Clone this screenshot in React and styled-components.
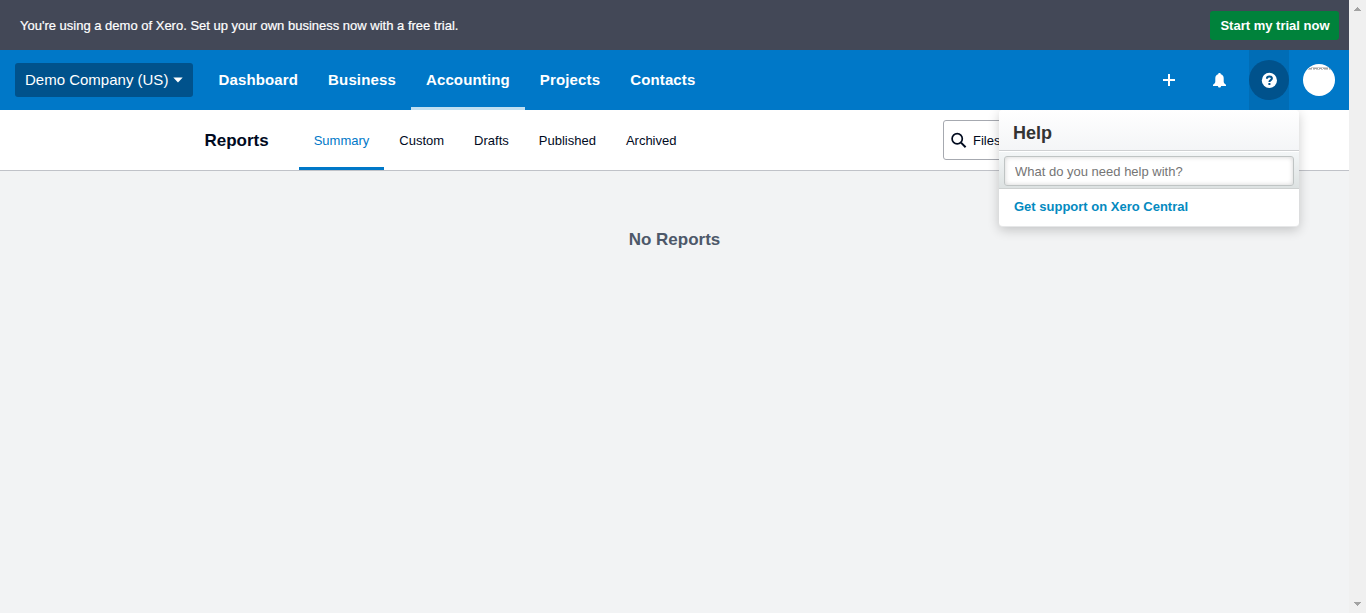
import React from "react";
import styled, { createGlobalStyle } from "styled-components";

const GlobalStyle = createGlobalStyle`
  * { box-sizing: border-box; }
  body { margin: 0; overflow: hidden; font-family: "Liberation Sans", Arial, sans-serif; font-size: 13px; color: #000a1e; }
`;

const Screen = styled.div`
  display: flex;
  height: 613px;
`;
const Page = styled.div`
  flex: 1;
  background: #f2f3f4;
`;
const ScrollTrack = styled.div`
  width: 17px;
  background: #f0f0f0;
  display: flex;
  flex-direction: column;
  justify-content: space-between;
  align-items: center;
  padding: 7px 0 7px;
`;
const Arrow = styled.svg`
  display: block;
  width: 7px;
  height: 4px;
  fill: #a3a3a3;
`;

const Banner = styled.div`
  height: 50px;
  display: flex;
  align-items: center;
  justify-content: space-between;
  padding: 0 10px 0 20px;
  background: #434857;
  color: #fff;
`;
const BannerText = styled.span`
  -webkit-text-stroke: 0.2px #fff;
`;
const TrialButton = styled.button`
  width: 129px;
  height: 29px;
  padding: 0;
  margin-top: 1px;
  border: 0;
  border-radius: 3px;
  background: #00823b;
  color: #fff;
  font: bold 13px "Liberation Sans", Arial, sans-serif;
  text-indent: 1px;
  white-space: nowrap;
`;

const NavBar = styled.header`
  height: 60px;
  display: flex;
  align-items: center;
  background: #0078c8;
  color: #fff;
  padding-left: 15px;
`;
const OrgButton = styled.button`
  width: 178px;
  height: 34px;
  display: flex;
  align-items: center;
  gap: 5px;
  padding: 0 0 1px 10px;
  margin-right: 10.5px;
  border: 0;
  border-radius: 3px;
  background: #00528c;
  color: #fff;
  font: 15px/17px "Liberation Sans", Arial, sans-serif;
  white-space: nowrap;
`;
const NavLinks = styled.nav`
  flex: 1;
  height: 60px;
  display: flex;
`;
const NavLink = styled.a`
  padding: 0 15px;
  font-size: 15px;
  font-weight: bold;
  letter-spacing: 0.14px;
  line-height: 60px;
  box-shadow: ${(p) => (p.$active ? "inset 0 -3px #bfdff2" : "none")};
`;
const NavIcon = styled.div`
  width: ${(p) => p.$width || 50}px;
  height: 60px;
  margin-right: ${(p) => p.$gap || 0}px;
  display: flex;
  align-items: center;
  justify-content: center;
  background: ${(p) => (p.$open ? "#006db6" : "transparent")};
`;
const HelpCircle = styled.span`
  width: 40px;
  height: 40px;
  display: flex;
  align-items: center;
  justify-content: center;
  border-radius: 50%;
  background: #00528c;
`;
const Glyph = styled.svg`
  display: block;
  flex: none;
`;

const SubBar = styled.div`
  height: 61px;
  display: flex;
  align-items: flex-start;
  background: #fff;
  border-bottom: 1px solid #c0c2c8;
  padding-left: 204.5px;
`;
const Title = styled.h1`
  width: 94.2px;
  margin: 0;
  font-size: 17px;
  line-height: 62px;
`;
const Tabs = styled.nav`
  flex: 1;
  height: 60px;
  display: flex;
`;
const Tab = styled.a`
  height: 60px;
  padding: 0 15px;
  line-height: 62px;
  color: ${(p) => (p.$active ? "#0078c8" : "#000a1e")};
  box-shadow: ${(p) => (p.$active ? "inset 0 -3px #0078c8" : "none")};
`;
const SearchBox = styled.div`
  width: 202px;
  height: 40px;
  margin: 10px 204px 0 0;
  display: flex;
  align-items: center;
  gap: 6.5px;
  padding-left: 6.5px;
  border: 1px solid #a6a9b0;
  border-radius: 3px;
`;

const Empty = styled.main`
  padding-top: 59px;
  text-align: center;
  font-size: 17px;
  line-height: 20px;
  font-weight: bold;
  color: #4d5869;
`;

const HelpPanel = styled.aside`
  position: absolute;
  left: 999px;
  top: 110px;
  width: 300px;
  height: 117px;
  border-radius: 4px;
  background: #fff;
  box-shadow: 0 3px 12px rgba(0, 0, 0, 0.2);
  border-bottom: 1px solid #e6e7e8;
  clip-path: inset(0 -20px -20px -20px);
`;
const HelpTitle = styled.h2`
  height: 41px;
  margin: 0;
  padding-left: 14px;
  border-bottom: 1px solid #ced0d2;
  border-radius: 4px 4px 0 0;
  background: linear-gradient(#fff, #f4f5f7);
  color: #333;
  font-size: 18px;
  line-height: 46px;
`;
const HelpSearch = styled.div`
  height: 38px;
  padding: 5px;
  border-top: 1px solid #fff;
  border-bottom: 1px solid #ced1d1;
  background: linear-gradient(#f3f6f7, #dde2e2);
`;
const HelpInput = styled.input`
  display: block;
  width: 290px;
  height: 30px;
  margin-top: -1px;
  padding: 0 10px;
  border: 1px solid #bfc4c4;
  border-radius: 3px;
  background: #fff;
  box-shadow: inset 0 0 5px rgba(0, 0, 0, 0.18);
  font: 13px "Liberation Sans", Arial, sans-serif;
  &::placeholder { color: #757575; opacity: 1; }
`;
const HelpLink = styled.a`
  display: block;
  padding-left: 15px;
  color: #048abf;
  font-weight: bold;
  line-height: 35px;
`;

const NAV = ["Dashboard", "Business", "Accounting", "Projects", "Contacts"];
const TABS = ["Summary", "Custom", "Drafts", "Published", "Archived"];

export default function App() {
  return (
    <Screen>
      <GlobalStyle />
      <Page>
        <Banner>
          <BannerText>You're using a demo of Xero. Set up your own business now with a free trial.</BannerText>
          <TrialButton>Start my trial now</TrialButton>
        </Banner>
        <NavBar>
          <OrgButton>
            Demo Company (US)
            <Glyph width="10" height="6" viewBox="0 0 10 6"><path d="M.3.5h9.4L5 5.5z" fill="#fff" /></Glyph>
          </OrgButton>
          <NavLinks>
            {NAV.map((n) => <NavLink key={n} $active={n === "Accounting"}>{n}</NavLink>)}
          </NavLinks>
          <NavIcon>
            <Glyph width="12" height="12" viewBox="0 0 12 12"><path d="M5 0h2v5h5v2H7v5H5V7H0V5h5z" fill="#fff" /></Glyph>
          </NavIcon>
          <NavIcon $gap={5}>
            <Glyph width="14" height="16" viewBox="0 0 14 16">
              <path d="M7.5 1c.8 0 1.300.5 1.300 1.300C10.700 2.900 11.700 4.300 11.700 6.300v3.200c0 1.300.8 2.200 2.300 3.300V14H1v-1.200c1.500-1.100 2.300-2 2.300-3.300V6.300c0-2 1-3.400 2.900-4C6.200 1.500 6.700 1 7.500 1z" fill="#fff" />
              <path d="M6 14h3c0 1-.6 1.500-1.500 1.500S6 15 6 14z" fill="#fff" />
            </Glyph>
          </NavIcon>
          <NavIcon $width={40} $open>
            <HelpCircle>
              <Glyph width="16" height="16" viewBox="0 0 16 16">
                <circle cx="8.4" cy="8.4" r="7.6" fill="#fff" />
                <path d="M5.9 6.7C5.9 5.200 6.9 4.500 8.400 4.500s2.500.8 2.500 2.100C10.900 8.100 8.400 8.200 8.400 9.900" fill="none" stroke="#00528c" strokeWidth="2" />
                <path d="M7.400 11h2v2H7.400z" fill="#00528c" />
              </Glyph>
            </HelpCircle>
          </NavIcon>
          <NavIcon $width={60}>
            <Glyph width="32" height="32" viewBox="0 0 32 32">
              <circle cx="16" cy="16" r="16" fill="#fff" />
              <path d="M8 3.5h17" stroke="#d0d0d0" strokeWidth="1" />
              <path d="M6 4.5h21" stroke="#a6a6a6" strokeWidth="1" strokeDasharray="3 1 5 1" />
              <path d="M5 5.5h23" stroke="#cccccc" strokeWidth="1" strokeDasharray="4 1 2 1" />
            </Glyph>
          </NavIcon>
        </NavBar>
        <SubBar>
          <Title>Reports</Title>
          <Tabs>{TABS.map((t) => <Tab key={t} $active={t === "Summary"}>{t}</Tab>)}</Tabs>
          <SearchBox>
            <Glyph width="16" height="16" viewBox="0 0 16 16" fill="none" stroke="#000a1e">
              <circle cx="6.2" cy="6.800" r="5.100" strokeWidth="1.700" />
              <path d="M10 10.600l4.600 4.600" strokeWidth="2" />
            </Glyph>
            Files
          </SearchBox>
        </SubBar>
        <Empty>No Reports</Empty>
      </Page>
      <ScrollTrack>
        <Arrow viewBox="0 0 7 4"><path d="M3 0h1v1h1v1h1v1h1v1H0V3h1V2h1V1h1z" /></Arrow>
        <Arrow viewBox="0 0 7 4"><path d="M0 0h7v1H6v1H5v1H4v1H3V3H2V2H1V1H0z" /></Arrow>
      </ScrollTrack>
      <HelpPanel>
        <HelpTitle>Help</HelpTitle>
        <HelpSearch><HelpInput placeholder="What do you need help with?" /></HelpSearch>
        <HelpLink>Get support on Xero Central</HelpLink>
      </HelpPanel>
    </Screen>
  );
}
